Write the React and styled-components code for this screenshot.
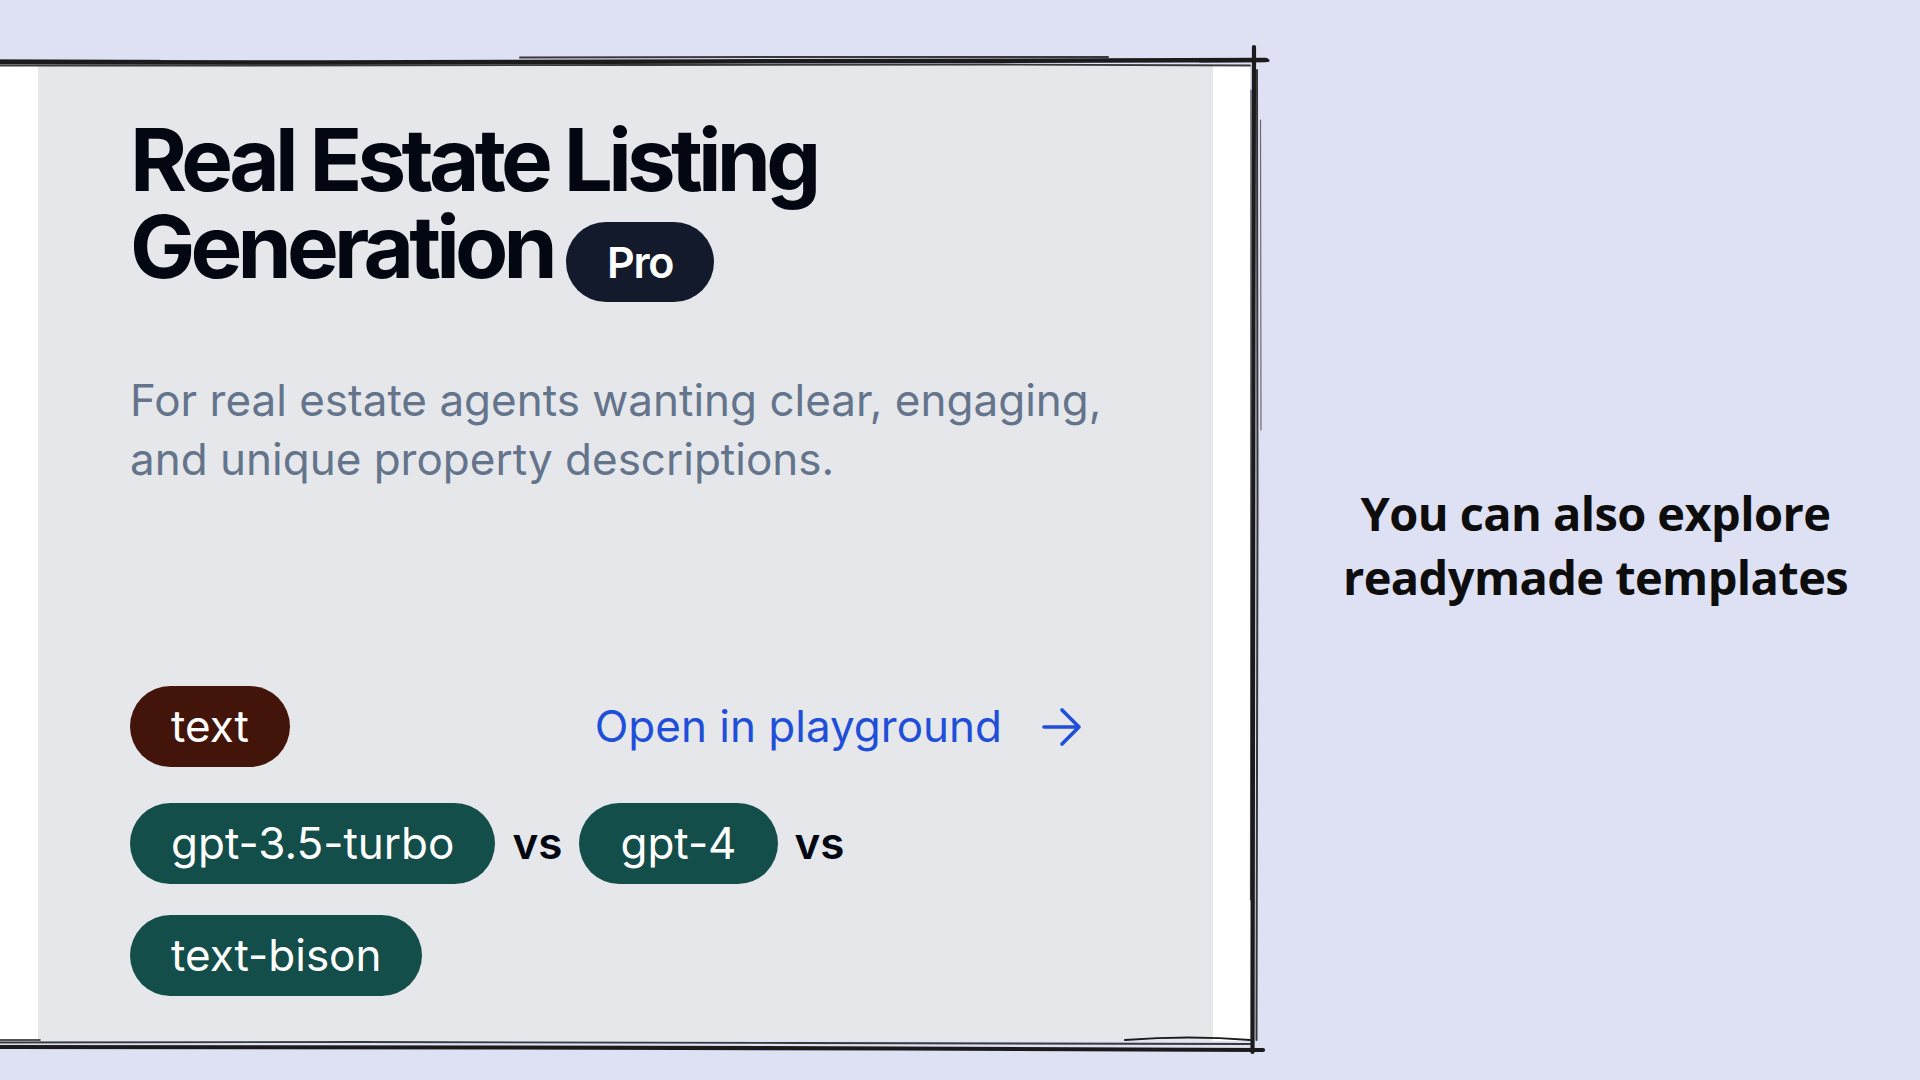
import React from "react";
import styled, { createGlobalStyle } from "styled-components";

const GlobalStyle = createGlobalStyle`
  html, body { margin: 0; padding: 0; }
  body {
    background: #dee0f3;
    font-family: Inter, "Noto Sans", sans-serif;
  }
`;

const Page = styled.div`
  display: flex;
  width: 1920px;
  height: 1080px;
  background: #dee0f3;
  overflow: hidden;
`;

const Stage = styled.div`
  position: relative;
  flex: none;
  width: 1263px;
  box-sizing: border-box;
  padding: 65px 13px 39px 0;
  display: flex;
`;

const Shot = styled.div`
  flex: 1;
  display: flex;
  background: #ffffff;
  padding: 0 37px 0 38px;
`;

const Panel = styled.div`
  flex: 1;
  display: flex;
  flex-direction: column;
  background: #e5e7eb;
  padding: 51px 92px 45px 92px;
  font-family: Inter, "Noto Sans", sans-serif;
`;

const Title = styled.h1`
  margin: 0;
  font-size: 87px;
  line-height: 87px;
  font-weight: 700;
  letter-spacing: -0.055em;
  color: #030712;
`;

const ProBadge = styled.span`
  display: inline-block;
  margin-left: 13px;
  padding: 20px 41px;
  border-radius: 999px;
  background: #131a2b;
  color: #ffffff;
  font-size: 43px;
  line-height: 40px;
  font-weight: 600;
  letter-spacing: -0.03em;
`;

const Description = styled.p`
  margin: 69px 0 0;
  font-size: 44px;
  line-height: 59px;
  font-weight: 400;
  color: #64748b;
`;

const Footer = styled.div`
  margin-top: auto;
  display: flex;
  flex-direction: column;
`;

const TopRow = styled.div`
  display: flex;
  align-items: center;
  justify-content: space-between;
  width: 952px;
`;

const Pill = styled.span`
  display: inline-flex;
  align-items: center;
  padding: 14px 41px;
  border-radius: 999px;
  background: ${(p) => p.$bg};
  color: #ffffff;
  font-size: 44px;
  line-height: 53px;
  font-weight: 400;
  white-space: nowrap;
`;

const PlaygroundLink = styled.a`
  display: inline-flex;
  align-items: center;
  gap: 40px;
  color: #1f4fd8;
  font-size: 44px;
  line-height: 53px;
  text-decoration: none;
`;

const ModelRow = styled.div`
  margin-top: 36px;
  display: flex;
  flex-wrap: wrap;
  align-items: center;
  column-gap: 17px;
  row-gap: 31px;
`;

const Versus = styled.span`
  font-size: 44px;
  line-height: 53px;
  font-weight: 600;
  color: #030712;
`;

const Sketch = styled.svg`
  position: absolute;
  left: 0;
  top: 0;
  width: 1263px;
  height: 1080px;
  pointer-events: none;
  overflow: visible;
`;

const Side = styled.div`
  flex: 1;
  display: flex;
  align-items: center;
  justify-content: center;
  padding: 10px 0 0 8px;
`;

const Caption = styled.p`
  margin: 0;
  text-align: center;
  font-family: "Open Sans", "Noto Sans", sans-serif;
  font-weight: 700;
  font-size: 47px;
  line-height: 64px;
  letter-spacing: -0.6px;
  color: #0d0d0d;
`;

const Arrow = () => (
  <svg width="40" height="40" viewBox="0 0 40 40" fill="none">
    <path
      d="M2 20 H37 M20 3 L37 20 L20 37"
      stroke="currentColor"
      strokeWidth="3.6"
      strokeLinecap="round"
      strokeLinejoin="round"
    />
  </svg>
);

const SketchFrame = () => (
  <Sketch viewBox="0 0 1263 1080">
    <g stroke="#1b1b1b" fill="none" strokeLinecap="round">
      {/* top */}
      <path d="M0 62 L320 62.5 L700 61.5 L1100 60.5 L1266 60" strokeWidth="4.5" />
      <path d="M0 65.5 L260 65.5 L640 65 L1000 64.5 L1250 65.5" strokeWidth="1.8" opacity="0.85" />
      <path d="M520 57.5 L820 57 L1108 57" strokeWidth="2" opacity="0.85" />
      <path d="M0 60 L160 60.5" strokeWidth="1.5" opacity="0.7" />
      <path d="M1200 61 L1268 60.5" strokeWidth="3" />
      {/* right */}
      <path d="M1254 47 L1253.5 300 L1253 700 L1252.5 1052" strokeWidth="4.2" />
      <path d="M1257 70 L1257.5 500 L1256.5 1040" strokeWidth="2" opacity="0.85" />
      <path d="M1260.5 120 L1261 430" strokeWidth="1.2" opacity="0.6" />
      <path d="M1251 90 L1250.5 900" strokeWidth="1.2" opacity="0.7" />
      {/* bottom */}
      <path d="M0 1047 L500 1047.5 L900 1048.5 L1263 1050" strokeWidth="4.2" />
      <path d="M0 1042.5 L360 1042 L800 1043 L1250 1044" strokeWidth="1.8" opacity="0.85" />
      <path d="M0 1040 L40 1040" strokeWidth="1.5" />
      <path d="M1125 1040 Q1190 1035 1250 1040" strokeWidth="2" />
    </g>
  </Sketch>
);

export default function App() {
  return (
    <>
      <GlobalStyle />
      <Page>
        <Stage>
          <Shot>
            <Panel>
              <Title>
                Real Estate Listing
                <br />
                Generation<ProBadge>Pro</ProBadge>
              </Title>
              <Description>
                For real estate agents wanting clear, engaging, and unique
                property descriptions.
              </Description>
              <Footer>
                <TopRow>
                  <Pill $bg="#43150a">text</Pill>
                  <PlaygroundLink href="#">
                    Open in playground
                    <Arrow />
                  </PlaygroundLink>
                </TopRow>
                <ModelRow>
                  <Pill $bg="#134e4a">gpt-3.5-turbo</Pill>
                  <Versus>vs</Versus>
                  <Pill $bg="#134e4a">gpt-4</Pill>
                  <Versus>vs</Versus>
                  <Pill $bg="#134e4a">text-bison</Pill>
                </ModelRow>
              </Footer>
            </Panel>
          </Shot>
          <SketchFrame />
        </Stage>
        <Side>
          <Caption>
            You can also explore
            <br />
            readymade templates
          </Caption>
        </Side>
      </Page>
    </>
  );
}
